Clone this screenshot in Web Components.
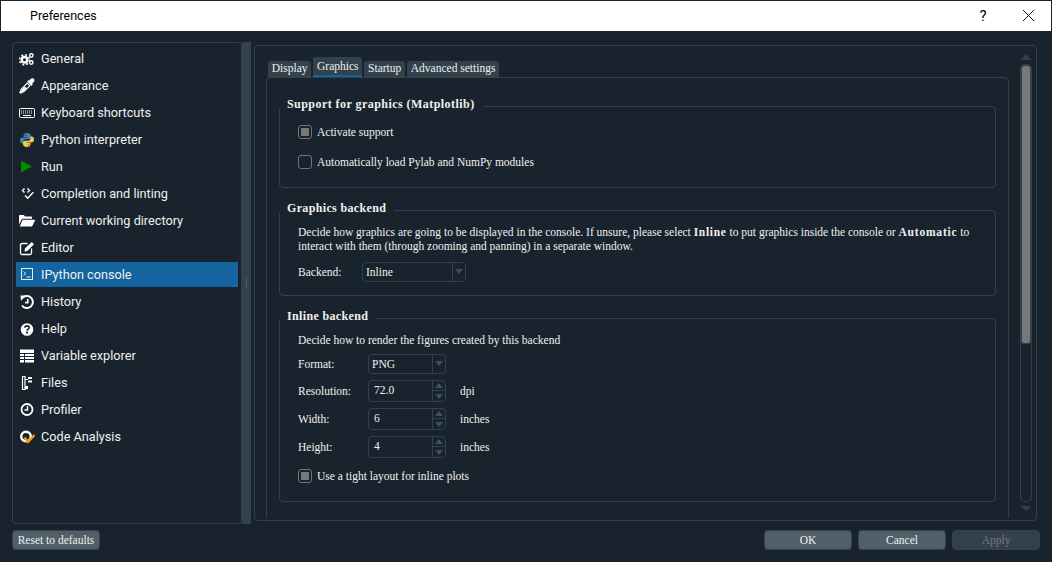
<!DOCTYPE html>
<html>
<head>
<meta charset="utf-8">
<title>Preferences</title>
<style>
  html, body { margin: 0; height: 100%; background: #19232d; overflow: hidden; }
</style>
</head>
<body>
<pref-window>
  <nav-list slot="nav">
    <nav-item icon="cogs">General</nav-item>
    <nav-item icon="dropper">Appearance</nav-item>
    <nav-item icon="keyboard">Keyboard shortcuts</nav-item>
    <nav-item icon="python">Python interpreter</nav-item>
    <nav-item icon="run">Run</nav-item>
    <nav-item icon="completion">Completion and linting</nav-item>
    <nav-item icon="folder">Current working directory</nav-item>
    <nav-item icon="editor">Editor</nav-item>
    <nav-item icon="console" selected>IPython console</nav-item>
    <nav-item icon="history">History</nav-item>
    <nav-item icon="help">Help</nav-item>
    <nav-item icon="table">Variable explorer</nav-item>
    <nav-item icon="files">Files</nav-item>
    <nav-item icon="clock">Profiler</nav-item>
    <nav-item icon="analysis">Code Analysis</nav-item>
  </nav-list>

  <tab-bar slot="tabs">
    <tab-item>Display</tab-item>
    <tab-item selected>Graphics</tab-item>
    <tab-item>Startup</tab-item>
    <tab-item>Advanced settings</tab-item>
  </tab-bar>

  <group-box title="Support for graphics (Matplotlib)" style="--top: 10px; --bottom: 18px; --legend-ls: .45px">
    <check-row checked>Activate support</check-row>
    <check-row style="margin-top: 16px">Automatically load Pylab and NumPy modules</check-row>
  </group-box>

  <group-box title="Graphics backend" style="--bottom: 13px; margin-top: 13px">
    <div style="line-height: 14.4px; white-space: nowrap"><span>Decide how graphics are going to be displayed in the console. If unsure, please select </span><b style="letter-spacing: .7px">Inline</b><span> to put graphics inside the console or </span><b style="letter-spacing: .8px">Automatic</b><span> to</span></div>
    <div style="line-height: 14.4px">interact with them (through zooming and panning) in a separate window.</div>
    <div style="display: grid; grid-template-columns: 64px auto; align-items: center; justify-content: start; margin-top: 8px">
      <span>Backend:</span>
      <combo-box style="width: 104px">Inline</combo-box>
    </div>
  </group-box>

  <group-box title="Inline backend" style="--top: 4px; --legend-pad: 6px; --bottom: 18px; margin-top: 13px">
    <div style="line-height: 14px">Decide how to render the figures created by this backend</div>
    <div style="display: grid; grid-template-columns: 70px 78px auto; column-gap: 0; row-gap: 6px; align-items: center; justify-content: start; margin-top: 7px">
      <span>Format:</span>
      <combo-box style="width: 78px">PNG</combo-box>
      <span></span>
      <span>Resolution:</span>
      <spin-box>72.0</spin-box>
      <span style="padding-left: 14px">dpi</span>
      <span>Width:</span>
      <spin-box>6</spin-box>
      <span style="padding-left: 14px">inches</span>
      <span>Height:</span>
      <spin-box>4</spin-box>
      <span style="padding-left: 14px">inches</span>
    </div>
    <check-row checked style="margin-top: 11px">Use a tight layout for inline plots</check-row>
  </group-box>
</pref-window>

<script>
const ICONS = {
  cogs: `<circle cx="5.500" cy="8.800" r="2.800" fill="none" stroke="#fff" stroke-width="2.500"/>
    <circle cx="5.500" cy="8.800" r="5" fill="none" stroke="#fff" stroke-width="1.500" stroke-dasharray="2 1.930"/>
    <circle cx="12.300" cy="4.500" r="1.700" fill="none" stroke="#fff" stroke-width="1.400"/>
    <circle cx="12.300" cy="11.500" r="1.700" fill="none" stroke="#fff" stroke-width="1.400"/>`,
  dropper: `<path d="M10 2.5 12 .8c1-.8 2.4-.6 3 .2s.6 2-.2 2.9L13 5.8l.8.9-1.3 1.2-4.4-4.4 1.2-1.2z" fill="#fff"/>
    <path d="M8.2 5.2 10.8 7.8 5 13.6 1.6 15 .9 14.3 2.4 11z" fill="none" stroke="#fff" stroke-width="1.2"/>
    <path d="M2.600 11.800 6 8.400 8 10.200 4.400 13.500 1.800 14.500z" fill="#fff"/>`,
  keyboard: `<rect x=".5" y="3.5" width="15" height="9" rx="1" fill="none" stroke="#fff"/>
    <path d="M2 6h12M2 8h12" stroke="#fff" stroke-dasharray="1 1" fill="none"/>
    <path d="M4 10.5h8" stroke="#fff" fill="none"/>`,
  python: `<path d="M8 1C5 1 4.6 2.2 4.6 3.4V5H8.2v.6H3.2C1.8 5.6 1 6.8 1 8.4c0 1.700.8 3 2.2 3h1.400V9.600c0-1.300 1.100-2.300 2.400-2.300h3c1.100 0 2-.9 2-2V3.400C11.600 2 10.500 1 8 1z" fill="#3f7fb5"/>
    <circle cx="6.200" cy="2.900" r=".7" fill="#19232d"/>
    <path d="M8 15c3 0 3.400-1.200 3.400-2.400V11H7.800v-.6h5c1.400 0 2.200-1.200 2.200-2.800 0-1.700-.8-3-2.200-3h-1.400v1.800c0 1.300-1.100 2.300-2.400 2.300h-3c-1.100 0-2 .9-2 2v1.900C4.400 14 5.500 15 8 15z" fill="#f2cc45"/>
    <circle cx="9.800" cy="13.100" r=".7" fill="#19232d"/>`,
  run: `<polygon points="2,1.500 13,7.500 2,13.500" fill="#008a00"/>`,
  completion: `<path d="M5.500 2.500 3.500 4.500 5.500 6.500M8.500 2.500 10.500 4.500 8.500 6.500M6 9.500 8.700 12.200 14.300 6.200" fill="none" stroke="#fff" stroke-width="1.400"/>`,
  folder: `<path d="M0 3.200C0 2.500.4 2 1 2h3.700l1.500 1.500H12c.6 0 1 .4 1 1v1.300H4c-.7 0-1.200.3-1.500.9L0 11.500z" fill="#fff"/>
    <path d="M3.600 6.800H15.300c.6 0 .9.500.6 1L13.300 13c-.2.300-.5.500-.9.500H.8z" fill="#fff"/>`,
  editor: `<path d="M8.500 3.500H3A1.500 1.500 0 0 0 1.500 5v8A1.500 1.500 0 0 0 3 14.500h8a1.500 1.500 0 0 0 1.500-1.500V8.500" fill="none" stroke="#fff" stroke-width="1.300"/>
    <path d="M6 8.600 12.700 1.900 15 4.200 8.300 10.900 5.500 11.400z" fill="#fff"/>`,
  console: `<rect x="2.500" y="1.500" width="11" height="11" fill="none" stroke="#e8eef4" stroke-width="1"/>
    <path d="M4.500 4.500 6.800 6.500 4.500 8.500M7.500 10h4" fill="none" stroke="#e8eef4" stroke-width="1"/>`,
  history: `<path d="M3.800 3.600A6 6 0 1 1 3 11.500" fill="none" stroke="#fff" stroke-width="2"/>
    <polygon points="1.500,1.500 7,1.500 2,6.800" fill="#fff"/>
    <path d="M8.800 5v3.600H6" fill="none" stroke="#fff" stroke-width="1.600"/>`,
  help: `<circle cx="8" cy="8.500" r="6.300" fill="#fff"/>
    <path d="M5.900 6.800C5.900 5.500 6.900 4.900 8 4.900s2.200.7 2.200 1.800c0 1.500-2.100 1.500-2.100 3" fill="none" stroke="#19232d" stroke-width="1.600"/>
    <rect x="7.100" y="10.600" width="2" height="1.800" fill="#19232d"/>`,
  table: `<rect x="1" y="1.500" width="14" height="13" fill="#fff"/>
    <path d="M0 5.500h16M0 8.500h16M0 11.500h16M5.500 5v10" stroke="#19232d" fill="none"/>`,
  files: `<path d="M3.500 1.500H6v13H3.500zM6 4.500h3M6 11.500h3" fill="none" stroke="#fff" stroke-width="1.200"/>
    <rect x="9" y="2" width="4" height="2" fill="#fff"/>
    <rect x="9" y="5.500" width="4" height="2" fill="#fff"/>
    <rect x="6" y="12" width="3" height="2.200" fill="#fff"/>`,
  clock: `<circle cx="8" cy="7.500" r="5.500" fill="none" stroke="#fff" stroke-width="1.800"/>
    <path d="M8.500 4v4H5.500" fill="none" stroke="#fff" stroke-width="1.400"/>`,
  analysis: `<circle cx="7" cy="7.500" r="4.800" fill="none" stroke="#fff" stroke-width="2.400"/>
    <path d="M5.500 8.500 9 13 15.500 6" fill="none" stroke="#f29d00" stroke-width="2.400"/>`
};

class PrefWindow extends HTMLElement {
  connectedCallback() {
    const template = document.createElement('template');
    template.innerHTML = `
      <style>
        :host { display: flex; flex-direction: column; width: 1052px; height: 562px; box-sizing: border-box; background: #19232d; color: #f0f0f0; font: 11.5px/14px "Liberation Serif", serif; }
        .title { flex: none; box-sizing: border-box; height: 30px; margin: 1px 1px 0; padding: 0 0 1px 29px; background: #fff; color: #000; display: flex; align-items: center; font: 12.5px Roboto, sans-serif; }
        .title span:first-child { flex: 1; }
        .help { width: 12px; margin-right: 28px; text-align: center; font-size: 15px; }
        .close { width: 22px; height: 14px; margin-right: 12px; }
        .close svg { display: block; margin: auto; }
        .body { flex: 1; min-height: 0; display: flex; padding: 11px 12px 0; }
        .side { flex: none; width: 230px; box-sizing: border-box; border: 1px solid #32414b; border-radius: 4px; padding: 3px; }
        .split { flex: none; width: 9px; background: #32414b; display: flex; align-items: center; justify-content: center; }
        .split i { width: 1px; height: 12px; background: #505f69; }
        .main { flex: 1; min-width: 0; margin: 3px 3px 3px 3px; box-sizing: border-box; border: 1px solid #32414b; border-radius: 4px; display: flex; padding: 0 4px 2px 11px; }
        .scroll { flex: 1; min-width: 0; overflow: hidden; padding-top: 11px; }
        .pane { border: 1px solid #32414b; border-radius: 4px; padding: 19px 12px 60px; margin-right: 0; }
        .foot { flex: none; display: flex; gap: 6px; padding: 6px 12px 12px; }
        .foot .grow { flex: 1; }
      </style>
      <div class="title">
        <span>Preferences</span>
        <span class="help">?</span>
        <span class="close"><svg width="13" height="13" viewBox="0 0 13 13"><path d="M1 1 12 12M12 1 1 12" stroke="#111" stroke-width="1" fill="none"/></svg></span>
      </div>
      <div class="body">
        <div class="side"><slot name="nav"></slot></div>
        <div class="split"><i></i></div>
        <div class="main">
          <div class="scroll">
            <slot name="tabs"></slot>
            <div class="pane"><slot></slot></div>
          </div>
          <scroll-bar></scroll-bar>
        </div>
      </div>
      <div class="foot">
        <push-button>Reset to defaults</push-button>
        <span class="grow"></span>
        <push-button>OK</push-button>
        <push-button>Cancel</push-button>
        <push-button disabled>Apply</push-button>
      </div>
    `;
    this.attachShadow({ mode: 'open' });
    this.shadowRoot.appendChild(template.content.cloneNode(true));
  }
}
customElements.define('pref-window', PrefWindow);

class NavList extends HTMLElement {
  connectedCallback() {
    const template = document.createElement('template');
    template.innerHTML = `
      <style>
        :host { display: flex; flex-direction: column; gap: 2px; }
      </style>
      <slot></slot>
    `;
    this.attachShadow({ mode: 'open' });
    this.shadowRoot.appendChild(template.content.cloneNode(true));
  }
}
customElements.define('nav-list', NavList);

class NavItem extends HTMLElement {
  connectedCallback() {
    const template = document.createElement('template');
    template.innerHTML = `
      <style>
        :host { display: flex; align-items: center; gap: 6px; height: 25px; padding-left: 3px; font: 12.7px Roboto, sans-serif; color: #f0f0f0; }
        :host([selected]) { background: #1464a0; }
        svg { flex: none; display: block; }
      </style>
      <svg width="16" height="16" viewBox="0 0 16 16">${ICONS[this.getAttribute('icon')]}</svg>
      <span><slot></slot></span>
    `;
    this.attachShadow({ mode: 'open' });
    this.shadowRoot.appendChild(template.content.cloneNode(true));
  }
}
customElements.define('nav-item', NavItem);

class TabBar extends HTMLElement {
  connectedCallback() {
    const template = document.createElement('template');
    template.innerHTML = `
      <style>
        :host { display: flex; gap: 2px; height: 20px; padding-left: 2px; align-items: flex-end; }
      </style>
      <slot></slot>
    `;
    this.attachShadow({ mode: 'open' });
    this.shadowRoot.appendChild(template.content.cloneNode(true));
  }
}
customElements.define('tab-bar', TabBar);

class TabItem extends HTMLElement {
  connectedCallback() {
    const template = document.createElement('template');
    template.innerHTML = `
      <style>
        :host { display: block; box-sizing: border-box; height: 16px; padding: 0 3.75px; background: #32414b; color: #f0f0f0; border-radius: 3px 3px 0 0; line-height: 14px; }
        :host([selected]) { height: 20px; padding-top: 2px; border-bottom: 2px solid #1464a0; }
      </style>
      <slot></slot>
    `;
    this.attachShadow({ mode: 'open' });
    this.shadowRoot.appendChild(template.content.cloneNode(true));
  }
}
customElements.define('tab-item', TabItem);

class GroupBox extends HTMLElement {
  connectedCallback() {
    const template = document.createElement('template');
    template.innerHTML = `
      <style>
        :host { display: block; }
        fieldset { margin: 0; padding: 0; min-width: 0; border: 1px solid #32414b; border-radius: 4px; }
        legend { padding: 0 8px var(--legend-pad, 4px) 7px; font-size: 12px; font-weight: bold; letter-spacing: var(--legend-ls, .35px); line-height: 14px; }
        .inner { padding: var(--top, 6px) 18px var(--bottom, 13px); }
      </style>
      <fieldset>
        <legend>${this.getAttribute('title')}</legend>
        <div class="inner"><slot></slot></div>
      </fieldset>
    `;
    this.attachShadow({ mode: 'open' });
    this.shadowRoot.appendChild(template.content.cloneNode(true));
  }
}
customElements.define('group-box', GroupBox);

class CheckRow extends HTMLElement {
  connectedCallback() {
    const template = document.createElement('template');
    template.innerHTML = `
      <style>
        :host { display: flex; align-items: center; gap: 5px; height: 14px; }
        .box { flex: none; box-sizing: border-box; width: 14px; height: 14px; border: 1px solid #6f7578; border-radius: 3px; display: flex; align-items: center; justify-content: center; }
        :host([checked]) .box::after { content: ""; width: 8px; height: 8px; background: #787878; }
      </style>
      <span class="box"></span>
      <span><slot></slot></span>
    `;
    this.attachShadow({ mode: 'open' });
    this.shadowRoot.appendChild(template.content.cloneNode(true));
  }
}
customElements.define('check-row', CheckRow);

class ComboBox extends HTMLElement {
  connectedCallback() {
    const template = document.createElement('template');
    template.innerHTML = `
      <style>
        :host { display: flex; box-sizing: border-box; height: 20px; border: 1px solid #32414b; border-radius: 4px; align-items: stretch; }
        .text { flex: 1; padding-left: 3px; line-height: 18px; }
        .btn { flex: none; width: 12px; border-left: 1px solid #32414b; display: flex; align-items: center; justify-content: center; }
        .btn i { border: 4px solid transparent; border-top: 5px solid #3f4f5a; border-bottom: 0; }
      </style>
      <span class="text"><slot></slot></span>
      <span class="btn"><i></i></span>
    `;
    this.attachShadow({ mode: 'open' });
    this.shadowRoot.appendChild(template.content.cloneNode(true));
  }
}
customElements.define('combo-box', ComboBox);

class SpinBox extends HTMLElement {
  connectedCallback() {
    const template = document.createElement('template');
    template.innerHTML = `
      <style>
        :host { display: flex; box-sizing: border-box; width: 78px; height: 22px; border: 1px solid #32414b; border-radius: 4px; align-items: stretch; }
        .text { flex: 1; padding-left: 5px; line-height: 19px; }
        .btns { flex: none; width: 12px; border-left: 1px solid #32414b; display: flex; flex-direction: column; }
        .btns span { flex: 1; display: flex; align-items: center; justify-content: center; }
        .btns span + span { border-top: 1px solid #32414b; }
        .up { border: 4px solid transparent; border-bottom: 5px solid #3f4f5a; border-top: 0; }
        .down { border: 4px solid transparent; border-top: 5px solid #3f4f5a; border-bottom: 0; }
      </style>
      <span class="text"><slot></slot></span>
      <span class="btns"><span><i class="up"></i></span><span><i class="down"></i></span></span>
    `;
    this.attachShadow({ mode: 'open' });
    this.shadowRoot.appendChild(template.content.cloneNode(true));
  }
}
customElements.define('spin-box', SpinBox);

class ScrollBar extends HTMLElement {
  connectedCallback() {
    const template = document.createElement('template');
    template.innerHTML = `
      <style>
        :host { flex: none; display: flex; flex-direction: column; align-items: center; gap: 4px; width: 12px; margin-left: 11px; padding: 8px 0 7px; }
        .up { border: 5px solid transparent; border-bottom: 6px solid #32414b; border-top: 0; }
        .down { border: 5px solid transparent; border-top: 5px solid #32414b; border-bottom: 0; }
        .track { flex: 1; width: 100%; box-sizing: border-box; border: 1px solid #32414b; border-radius: 5px; }
        .thumb { height: 279px; margin: 0; background: #787878; border-radius: 4px; box-shadow: inset 0 0 0 1px #32414b; }
      </style>
      <i class="up"></i>
      <div class="track"><div class="thumb"></div></div>
      <i class="down"></i>
    `;
    this.attachShadow({ mode: 'open' });
    this.shadowRoot.appendChild(template.content.cloneNode(true));
  }
}
customElements.define('scroll-bar', ScrollBar);

class PushButton extends HTMLElement {
  connectedCallback() {
    const template = document.createElement('template');
    template.innerHTML = `
      <style>
        :host { display: block; box-sizing: border-box; width: 88px; height: 20px; background: #505f69; border: 1px solid #32414b; border-radius: 4px; text-align: center; line-height: 18px; color: #f0f0f0; }
        :host([disabled]) { background: #32414b; color: #787878; }
      </style>
      <slot></slot>
    `;
    this.attachShadow({ mode: 'open' });
    this.shadowRoot.appendChild(template.content.cloneNode(true));
  }
}
customElements.define('push-button', PushButton);
</script>
</body>
</html>
